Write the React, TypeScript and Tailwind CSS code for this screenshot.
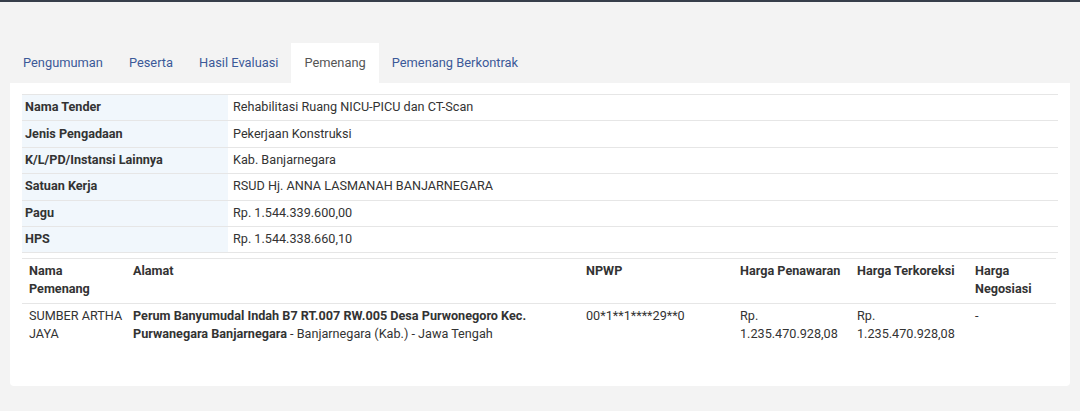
import React from "react";

const tabs = ["Pengumuman", "Peserta", "Hasil Evaluasi", "Pemenang", "Pemenang Berkontrak"];

const info: [string, string][] = [
  ["Nama Tender", "Rehabilitasi Ruang NICU-PICU dan CT-Scan"],
  ["Jenis Pengadaan", "Pekerjaan Konstruksi"],
  ["K/L/PD/Instansi Lainnya", "Kab. Banjarnegara"],
  ["Satuan Kerja", "RSUD Hj. ANNA LASMANAH BANJARNEGARA"],
  ["Pagu", "Rp. 1.544.339.600,00"],
  ["HPS", "Rp. 1.544.338.660,10"],
];

export default function App() {
  return (
    <div className="min-h-[411px] w-[1080px] bg-[#f3f3f3] font-['Roboto',sans-serif] text-[12.65px] text-[#333]">
      <div className="h-[2px] bg-[#363e4a]" />
      <div className="px-[10px] pt-[41px]">
        {/* tabs */}
        <ul className="flex h-[40px] items-stretch">
          {tabs.map((t) => (
            <li
              key={t}
              className={
                t === "Pemenang"
                  ? "flex items-center bg-white px-[13px] text-[12.85px] text-[#555]"
                  : "flex items-center px-[13px] text-[12.85px] text-[#3b5998]"
              }
            >
              {t}
            </li>
          ))}
        </ul>

        {/* card */}
        <div className="h-[303px] rounded-b-[4px] bg-white px-[12px] pt-[11px]">
          <table className="w-full border-collapse">
            <tbody>
              {info.map(([k, v]) => (
                <tr key={k} className="h-[26.4px] border-y border-[#e6e6e6]">
                  <th className="w-[206px] bg-[#f1f7fc] pl-[3px] text-left font-bold">{k}</th>
                  <td className="pl-[5px]">{v}</td>
                </tr>
              ))}
            </tbody>
          </table>

          <table className="mt-[5px] w-[1034px] table-fixed border-collapse leading-[18px]">
            <colgroup>
              <col className="w-[104px]" />
              <col className="w-[453px]" />
              <col className="w-[154px]" />
              <col className="w-[117px]" />
              <col className="w-[118px]" />
              <col className="w-[88px]" />
            </colgroup>
            <thead>
              <tr className="border-y border-[#e6e6e6] align-top">
                <th className="pl-[7px] pr-[2px] pt-[3px] pb-[5px] text-left font-bold">Nama Pemenang</th>
                <th className="px-[7px] pt-[3px] pb-[5px] text-left font-bold">Alamat</th>
                <th className="px-[7px] pt-[3px] pb-[5px] text-left font-bold">NPWP</th>
                <th className="px-[7px] pt-[3px] pb-[5px] text-left font-bold">Harga Penawaran</th>
                <th className="px-[7px] pt-[3px] pb-[5px] text-left font-bold">Harga Terkoreksi</th>
                <th className="px-[7px] pt-[3px] pb-[5px] text-left font-bold">Harga Negosiasi</th>
              </tr>
            </thead>
            <tbody>
              <tr className="align-top">
                <td className="pl-[7px] pr-[2px] pt-[3px]">SUMBER ARTHA JAYA</td>
                <td className="px-[7px] pt-[3px]">
                  <b>Perum Banyumudal Indah B7 RT.007 RW.005 Desa Purwonegoro Kec. Purwanegara Banjarnegara</b>
                  {" - Banjarnegara (Kab.) - Jawa Tengah"}
                </td>
                <td className="px-[7px] pt-[3px]">00*1**1****29**0</td>
                <td className="px-[7px] pt-[3px]">Rp. 1.235.470.928,08</td>
                <td className="px-[7px] pt-[3px]">Rp. 1.235.470.928,08</td>
                <td className="px-[7px] pt-[3px]">-</td>
              </tr>
            </tbody>
          </table>
        </div>
      </div>
    </div>
  );
}
